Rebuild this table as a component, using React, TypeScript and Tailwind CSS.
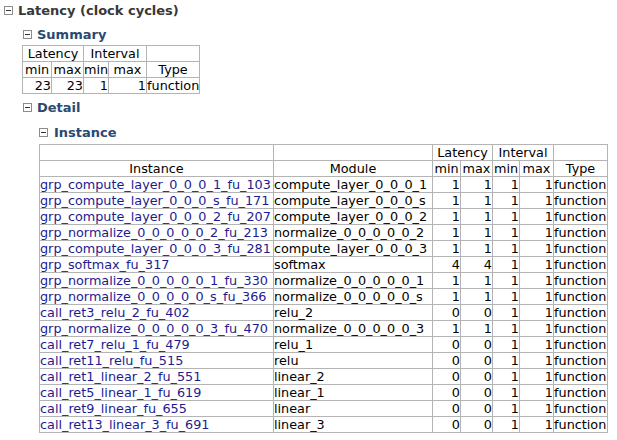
import React from 'react';

const font = "font-['DejaVu_Sans',sans-serif]";

const instances = [
  ['grp_compute_layer_0_0_0_1_fu_103', 'compute_layer_0_0_0_1', '1', '1', '1', '1'],
  ['grp_compute_layer_0_0_0_s_fu_171', 'compute_layer_0_0_0_s', '1', '1', '1', '1'],
  ['grp_compute_layer_0_0_0_2_fu_207', 'compute_layer_0_0_0_2', '1', '1', '1', '1'],
  ['grp_normalize_0_0_0_0_0_2_fu_213', 'normalize_0_0_0_0_0_2', '1', '1', '1', '1'],
  ['grp_compute_layer_0_0_0_3_fu_281', 'compute_layer_0_0_0_3', '1', '1', '1', '1'],
  ['grp_softmax_fu_317', 'softmax', '4', '4', '1', '1'],
  ['grp_normalize_0_0_0_0_0_1_fu_330', 'normalize_0_0_0_0_0_1', '1', '1', '1', '1'],
  ['grp_normalize_0_0_0_0_0_s_fu_366', 'normalize_0_0_0_0_0_s', '1', '1', '1', '1'],
  ['call_ret3_relu_2_fu_402', 'relu_2', '0', '0', '1', '1'],
  ['grp_normalize_0_0_0_0_0_3_fu_470', 'normalize_0_0_0_0_0_3', '1', '1', '1', '1'],
  ['call_ret7_relu_1_fu_479', 'relu_1', '0', '0', '1', '1'],
  ['call_ret11_relu_fu_515', 'relu', '0', '0', '1', '1'],
  ['call_ret1_linear_2_fu_551', 'linear_2', '0', '0', '1', '1'],
  ['call_ret5_linear_1_fu_619', 'linear_1', '0', '0', '1', '1'],
  ['call_ret9_linear_fu_655', 'linear', '0', '0', '1', '1'],
  ['call_ret13_linear_3_fu_691', 'linear_3', '0', '0', '1', '1'],
];

const cell = 'border border-[#b4b4b4] h-[16px] p-0 leading-[15px] whitespace-nowrap overflow-hidden';

const Toggle = () => (
  <span className="inline-flex items-center justify-center w-[9px] h-[9px] border border-[#8c8c8c] bg-white">
    <span className="block w-[5px] h-[1px] bg-[#333]" />
  </span>
);

const Heading = ({ children, className, iconLeft, textLeft }: { children: React.ReactNode; className: string; iconLeft: string; textLeft: string }) => (
  <div className={`flex items-center h-[17px] font-bold text-[13px] ${iconLeft} ${className}`}>
    <Toggle />
    <span className={textLeft}>{children}</span>
  </div>
);

export default function App() {
  return (
    <div className={`${font} text-[12.8px] text-black bg-white w-[617px] h-[440px] pt-[2px]`}>
      <Heading className="text-[#383838]" iconLeft="pl-[4px]" textLeft="ml-[5px]">Latency (clock cycles)</Heading>

      <Heading className="text-[#284a73] mt-[7px]" iconLeft="pl-[23px]" textLeft="ml-[5px]">Summary</Heading>
      <table className="ml-[22px] mt-[2px] border-collapse table-fixed w-[177px]">
        <colgroup>
          <col className="w-[29px]" />
          <col className="w-[32px]" />
          <col className="w-[25px]" />
          <col className="w-[38px]" />
          <col className="w-[53px]" />
        </colgroup>
        <tbody>
          <tr>
            <td colSpan={2} className={`${cell} text-center`}>Latency</td>
            <td colSpan={2} className={`${cell} text-center`}>Interval</td>
            <td className={cell}></td>
          </tr>
          <tr>
            <td className={`${cell} text-center`}>min</td>
            <td className={`${cell} text-center`}>max</td>
            <td className={`${cell} text-center`}>min</td>
            <td className={`${cell} text-center`}>max</td>
            <td className={`${cell} text-center`}>Type</td>
          </tr>
          <tr>
            <td className={`${cell} text-right`}>23</td>
            <td className={`${cell} text-right`}>23</td>
            <td className={`${cell} text-right`}>1</td>
            <td className={`${cell} text-right`}>1</td>
            <td className={`${cell} text-left`}>function</td>
          </tr>
        </tbody>
      </table>

      <Heading className="text-[#284a73] mt-[5px]" iconLeft="pl-[23px]" textLeft="ml-[5px]">Detail</Heading>
      <Heading className="text-[#284a73] mt-[8px]" iconLeft="pl-[39px]" textLeft="ml-[6px]">Instance</Heading>
      <table className="ml-[39px] mt-[3px] border-collapse table-fixed w-[568px]">
        <colgroup>
          <col className="w-[234px]" />
          <col className="w-[159px]" />
          <col className="w-[28px]" />
          <col className="w-[32px]" />
          <col className="w-[27px]" />
          <col className="w-[34px]" />
          <col className="w-[54px]" />
        </colgroup>
        <tbody>
          <tr>
            <td className={cell}></td>
            <td className={cell}></td>
            <td colSpan={2} className={`${cell} text-center`}>Latency</td>
            <td colSpan={2} className={`${cell} text-center`}>Interval</td>
            <td className={cell}></td>
          </tr>
          <tr>
            <td className={`${cell} text-center`}>Instance</td>
            <td className={`${cell} text-center`}>Module</td>
            <td className={`${cell} text-center`}>min</td>
            <td className={`${cell} text-center`}>max</td>
            <td className={`${cell} text-center`}>min</td>
            <td className={`${cell} text-center`}>max</td>
            <td className={`${cell} text-center`}>Type</td>
          </tr>
          {instances.map((r) => (
            <tr key={r[0]}>
              <td className={`${cell} text-left text-[#1c1c8f]`}>{r[0]}</td>
              <td className={`${cell} text-left`}>{r[1]}</td>
              <td className={`${cell} text-right`}>{r[2]}</td>
              <td className={`${cell} text-right`}>{r[3]}</td>
              <td className={`${cell} text-right`}>{r[4]}</td>
              <td className={`${cell} text-right`}>{r[5]}</td>
              <td className={`${cell} text-left`}>function</td>
            </tr>
          ))}
        </tbody>
      </table>
    </div>
  );
}
